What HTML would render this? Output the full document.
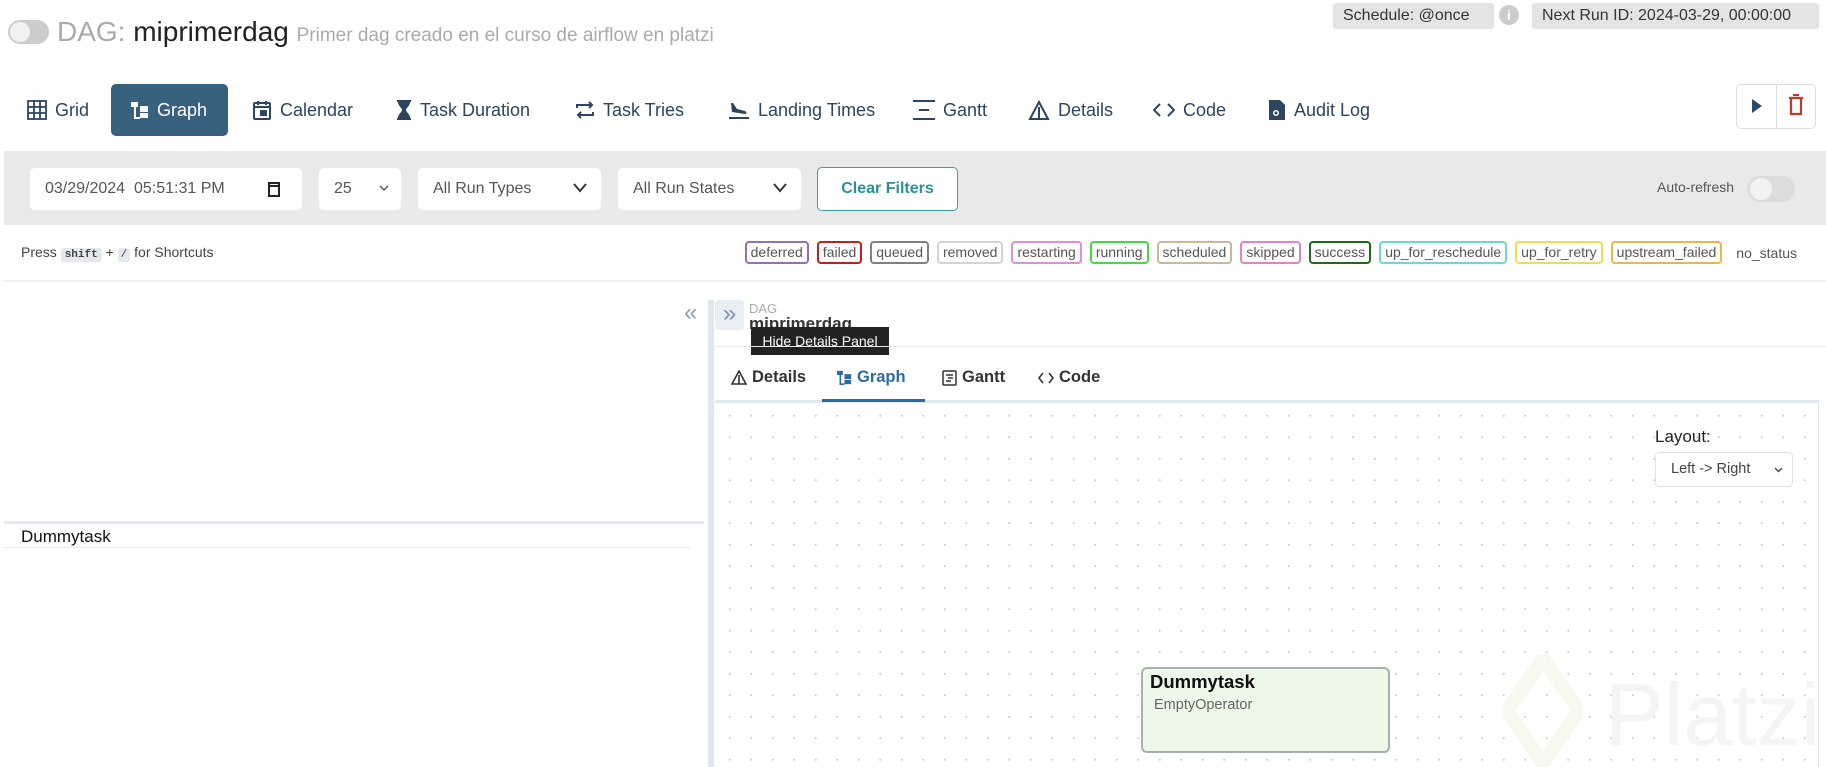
<!DOCTYPE html>
<html><head><meta charset="utf-8"><style>
*{box-sizing:border-box;margin:0;padding:0}
body{width:1826px;height:767px;overflow:hidden;background:#fff;font-family:"Liberation Sans",Arial,sans-serif;position:relative;color:#333}
.a{position:absolute}
.nav{position:absolute;top:84px;height:52px;display:flex;align-items:center;font-size:18px;color:#2c4560;gap:8px;white-space:nowrap}
.nav svg{flex:none}
.badge{position:absolute;top:3px;height:26px;background:#e4e4e4;border-radius:3px;font-size:16px;color:#333;line-height:26px;padding:0 10px}
.inp{position:absolute;top:168px;height:42px;background:#fff;border-radius:5px;font-size:16px;color:#555;line-height:42px;padding-left:15px}
.chev{position:absolute;right:14px;top:0}
.lg{display:inline-block;border:2px solid;border-radius:4px;font-size:14px;line-height:19px;padding:0 4px;margin-left:8px;color:#555;height:23px}
.tab{position:absolute;top:368px;font-size:16.5px;color:#333;display:flex;align-items:center;gap:5px}
</style></head><body>

<div class="a" style="left:8px;top:20px;width:41px;height:24px;border-radius:12px;background:#ccc"></div>
<div class="a" style="left:10px;top:22px;width:20px;height:20px;border-radius:50%;background:#f2f2f2"></div>
<div class="a" style="left:57px;top:15px;font-size:28px;white-space:nowrap;line-height:34px"><span style="color:#aaa">DAG: </span><span style="color:#222">miprimerdag</span> <span style="font-size:19px;color:#aaa">Primer dag creado en el curso de airflow en platzi</span></div>

<div class="badge" style="left:1333px;width:161px">Schedule: @once</div>
<div class="a" style="left:1499px;top:5px;width:20px;height:20px;border-radius:50%;background:#ccc;color:#fff;font-size:14px;font-weight:bold;text-align:center;line-height:20px">i</div>
<div class="badge" style="left:1532px;width:287px">Next Run ID: 2024-03-29, 00:00:00</div>

<div class="a" style="left:111px;top:84px;width:117px;height:52px;background:#38607f;border-radius:5px"></div>
<div class="nav" style="left:27px"><svg width="20" height="20" viewBox="0 0 20 20" fill="none" stroke="#2c4560" stroke-width="1.8"><rect x="1" y="1" width="18" height="18"/><path d="M7 1v18M13 1v18M1 7h18M1 13h18"/></svg>Grid</div>
<div class="nav" style="left:131px;color:#fff"><svg width="18" height="18" viewBox="0 0 18 18" fill="#fff"><rect x="0" y="1" width="7" height="5"/><rect x="9" y="5" width="8" height="6"/><rect x="9" y="12" width="8" height="5"/><path d="M3 6h2v10h4v2H3z"/></svg>Graph</div>
<div class="nav" style="left:252px"><svg width="20" height="20" viewBox="0 0 20 20" fill="none" stroke="#2c4560" stroke-width="2"><rect x="2" y="3" width="16" height="16" rx="1"/><path d="M2 7h16M6 1v4M14 1v4"/><rect x="9" y="11" width="5" height="4" fill="#2c4560"/></svg>Calendar</div>
<div class="nav" style="left:396px"><svg width="16" height="22" viewBox="0 0 16 22" fill="#2c4560"><path d="M1 1h14v2h-1c0 4-4 6-4 8 0 2 4 4 4 8h1v2H1v-2h1c0-4 4-6 4-8 0-2-4-4-4-8H1z"/></svg>Task Duration</div>
<div class="nav" style="left:575px"><svg width="20" height="20" viewBox="0 0 20 20" fill="none" stroke="#2c4560" stroke-width="2"><path d="M2 8V5h15M14 2l3 3-3 3M18 12v3H3M6 18l-3-3 3-3"/></svg>Task Tries</div>
<div class="nav" style="left:728px"><svg width="22" height="20" viewBox="0 0 22 20" fill="#2c4560"><path d="M1 17h20v2H1zM3 3l2 0 4 6 8 2c2 1 2 3 0 3L4 12z"/></svg>Landing Times</div>
<div class="nav" style="left:913px"><svg width="22" height="20" viewBox="0 0 22 20" fill="#2c4560"><rect x="0" y="0" width="22" height="2"/><rect x="6" y="9" width="10" height="2"/><rect x="0" y="18" width="22" height="2"/></svg>Gantt</div>
<div class="nav" style="left:1028px"><svg width="22" height="20" viewBox="0 0 22 20" fill="none" stroke="#2c4560" stroke-width="2"><path d="M11 2L2 19h18z M11 7v12"/></svg>Details</div>
<div class="nav" style="left:1153px"><svg width="22" height="16" viewBox="0 0 22 16" fill="none" stroke="#2c4560" stroke-width="2"><path d="M7 2L1 8l6 6M15 2l6 6-6 6"/></svg>Code</div>
<div class="nav" style="left:1268px"><svg width="18" height="22" viewBox="0 0 18 22" fill="#2c4560"><path d="M1 1h11l5 5v15H1z"/><circle cx="8" cy="14" r="3" fill="#fff"/><circle cx="8" cy="14" r="1.5" fill="#2c4560"/></svg>Audit Log</div>

<div class="a" style="left:1736px;top:84px;width:80px;height:45px;border:1px solid #ddd;border-radius:5px"></div>
<div class="a" style="left:1776px;top:84px;width:1px;height:45px;background:#ddd"></div>
<svg class="a" style="left:1750px;top:97px" width="14" height="18" viewBox="0 0 14 18"><path d="M2 2l10 7-10 7z" fill="#2c4a68"/></svg>
<svg class="a" style="left:1788px;top:94px" width="16" height="22" viewBox="0 0 16 22" fill="none" stroke="#c0392b" stroke-width="2.2"><path d="M1 4h14M5 1h6M3 5v15h10V5"/></svg>

<div class="a" style="left:4px;top:151px;width:1822px;height:74px;background:#e9e9e9"></div>
<div class="inp" style="left:30px;width:272px">03/29/2024&nbsp; 05:51:31 PM<svg class="a" style="left:238px;top:13px" width="12" height="16" viewBox="0 0 12 16" fill="none" stroke="#222" stroke-width="2"><rect x="1" y="2" width="10" height="13"/><path d="M1 5h10"/></svg></div>
<div class="inp" style="left:319px;width:82px">25<svg class="chev" style="top:17px;right:12px" width="10" height="7" viewBox="0 0 10 7" fill="none" stroke="#555" stroke-width="1.5"><path d="M1 1l4 4 4-4"/></svg></div>
<div class="inp" style="left:418px;width:183px">All Run Types<svg class="chev" style="top:15px" width="14" height="10" viewBox="0 0 14 10" fill="none" stroke="#333" stroke-width="2"><path d="M1 1l6 7 6-7"/></svg></div>
<div class="inp" style="left:618px;width:183px">All Run States<svg class="chev" style="top:15px" width="14" height="10" viewBox="0 0 14 10" fill="none" stroke="#333" stroke-width="2"><path d="M1 1l6 7 6-7"/></svg></div>
<div class="a" style="left:817px;top:167px;width:141px;height:44px;border:1.5px solid #3aa0a6;border-radius:5px;background:#fff;color:#2a8f99;font-weight:bold;font-size:16px;text-align:center;line-height:41px">Clear Filters</div>
<div class="a" style="left:1657px;top:179px;font-size:14px;color:#555">Auto-refresh</div>
<div class="a" style="left:1747px;top:176px;width:48px;height:26px;border-radius:13px;background:#dcdcdc"></div>
<div class="a" style="left:1750px;top:178px;width:22px;height:22px;border-radius:50%;background:#f2f2f2"></div>

<div class="a" style="left:21px;top:243px;font-size:14px;color:#444;line-height:18px">Press <span style="background:#e5e9ee;font-family:'Liberation Mono',monospace;font-weight:bold;font-size:11px;padding:1px 4px;border-radius:3px">shift</span> + <span style="background:#e5e9ee;font-family:'Liberation Mono',monospace;font-size:11px;padding:1px 3px;border-radius:3px">/</span> for Shortcuts</div>
<div class="a" style="right:29px;top:241px;white-space:nowrap;display:flex;align-items:center">
<span class="lg" style="border-color:#9370b0">deferred</span><span class="lg" style="border-color:#c41e1e">failed</span><span class="lg" style="border-color:#808080">queued</span><span class="lg" style="border-color:#d3d3d3">removed</span><span class="lg" style="border-color:#dd8fdd">restarting</span><span class="lg" style="border-color:#3fdd3f">running</span><span class="lg" style="border-color:#c9b99c">scheduled</span><span class="lg" style="border-color:#e580c8">skipped</span><span class="lg" style="border-color:#1e6b1e">success</span><span class="lg" style="border-color:#6bd8d3">up_for_reschedule</span><span class="lg" style="border-color:#f0dc4c">up_for_retry</span><span class="lg" style="border-color:#e6b84a">upstream_failed</span><span style="font-size:14px;color:#555;margin-left:14px">no_status</span></div>
<div class="a" style="left:4px;top:280px;width:1822px;height:2px;background:#eef0f2"></div>

<div class="a" style="left:684px;top:300px;font-size:24px;color:#8aa0b8;line-height:26px">«</div>
<div class="a" style="left:4px;top:521px;width:700px;height:3px;background:#e3e7f0"></div>
<div class="a" style="left:21px;top:527px;font-size:17px;color:#111">Dummytask</div>
<div class="a" style="left:4px;top:547px;width:686px;height:1px;background:#e8e8e8"></div>
<div class="a" style="left:708px;top:300px;width:6px;height:467px;background:#dfe6ee"></div>

<div class="a" style="left:715px;top:300px;width:29px;height:30px;background:#e8eef4;border-radius:4px;color:#7b93ad;font-size:24px;text-align:center;line-height:28px">»</div>
<div class="a" style="left:749px;top:301px;font-size:13px;color:#aaa">DAG</div>
<div class="a" style="left:749px;top:314px;font-size:17px;font-weight:bold;color:#333">miprimerdag</div>
<div class="a" style="left:751px;top:327px;width:138px;height:28px;background:#222;color:#fff;font-size:14px;line-height:28px;text-align:center">Hide Details Panel</div>
<div class="a" style="left:715px;top:346px;width:1111px;height:1px;background:#eaeaea"></div>
<div class="tab" style="left:731px;font-weight:bold"><svg width="16" height="15" viewBox="0 0 16 15" fill="none" stroke="#333" stroke-width="1.6"><path d="M8 1L1 14h14zM8 5v9"/></svg>Details</div>
<div class="tab" style="left:837px;color:#2b6aa3;font-weight:bold"><svg width="15" height="15" viewBox="0 0 18 18" fill="#2b6aa3"><rect x="0" y="1" width="7" height="5"/><rect x="9" y="5" width="8" height="6"/><rect x="9" y="12" width="8" height="5"/><path d="M3 6h2v10h4v2H3z"/></svg>Graph</div>
<div class="tab" style="left:942px;font-weight:bold"><svg width="15" height="16" viewBox="0 0 15 16" fill="none" stroke="#333" stroke-width="1.5"><rect x="1" y="1" width="13" height="14" rx="1"/><path d="M4 5h7M6 8h5M4 11h5"/></svg>Gantt</div>
<div class="tab" style="left:1038px;font-weight:bold"><svg width="16" height="12" viewBox="0 0 16 12" fill="none" stroke="#333" stroke-width="1.6"><path d="M5 1L1 6l4 5M11 1l4 5-4 5"/></svg>Code</div>
<div class="a" style="left:715px;top:400px;width:1104px;height:3px;background:#e2e8f0"></div>
<div class="a" style="left:822px;top:399px;width:103px;height:3px;background:#2b6aa3"></div>

<div class="a" style="left:715px;top:403px;width:1104px;height:364px;border-right:1px solid #e6e6e6;background-image:radial-gradient(circle,#c8c8c8 0.8px,transparent 1.2px);background-size:21.5px 21.5px;background-position:4px 2px"></div>
<div class="a" style="left:1655px;top:427px;font-size:17px;color:#222">Layout:</div>
<div class="a" style="left:1655px;top:452px;width:138px;height:35px;border:1px solid #e2e2e2;border-radius:4px;background:#fff;font-size:14.5px;color:#444;line-height:33px;padding-left:15px">Left -&gt; Right<svg class="a" style="left:118px;top:14px" width="9" height="6" viewBox="0 0 9 6" fill="none" stroke="#444" stroke-width="1.4"><path d="M1 1l3.5 3.5L8 1"/></svg></div>

<svg class="a" style="left:1503px;top:655px" width="80" height="112" viewBox="0 0 80 112"><path d="M40 4L76 56 40 108 4 56z" fill="none" stroke="#f7f9ef" stroke-width="14" stroke-linejoin="round"/></svg>
<div class="a" style="left:1605px;top:665px;font-size:88px;color:#f4f4f4;line-height:100px">Platzi</div>

<div class="a" style="left:1141px;top:667px;width:249px;height:86px;background:#edf8e9;border:2px solid #a7b0ae;border-radius:6px"></div>
<div class="a" style="left:1150px;top:671px;font-size:18.5px;font-weight:bold;color:#111">Dummytask</div>
<div class="a" style="left:1154px;top:697px;font-size:14.5px;color:#666">EmptyOperator</div>
</body></html>
